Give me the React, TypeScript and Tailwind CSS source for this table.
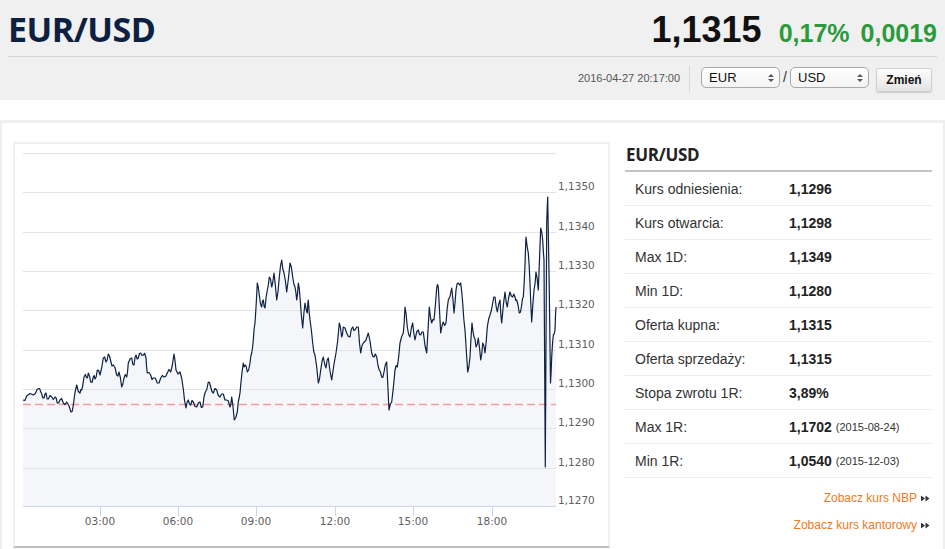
import React from 'react';

// Intraday EUR/USD quote card: header with rate, chart on the left, stats table on the right.

const PTS: [number, number][] = [
  [23, 400], [26.7, 396], [33.3, 395], [37.3, 389], [41.7, 394], [44, 398], [46, 393], [48.3, 399],
  [51.7, 397], [55, 397], [57.3, 403], [60, 400], [63.3, 403], [66.7, 402], [71, 412], [73.3, 405],
  [76.7, 385], [80, 393], [81.7, 390], [84, 377], [86.7, 378], [88.3, 373], [90.7, 382], [93.3, 377],
  [95, 379], [97.3, 370], [100, 375], [103.3, 358], [106, 362], [108.3, 354], [110.7, 361], [113.3, 365],
  [116.7, 375], [119, 372], [121.7, 387], [124, 378], [126.7, 377], [128.3, 363], [131.7, 358], [134, 365],
  [136, 355], [138.3, 358], [140.7, 353], [143.3, 355], [146, 358], [147.3, 373], [150.7, 375], [153.3, 378],
  [157.3, 383], [160.7, 378], [164, 377], [167.3, 373], [170.7, 372], [174, 354], [176, 370], [180, 372],
  [183.3, 389], [186, 408], [188.3, 400], [190.7, 405], [193.3, 402], [196.7, 407], [200, 402], [202.7, 407],
  [205.3, 392], [208.3, 382], [210.7, 387], [213.3, 393], [216.7, 390], [220, 397], [223.3, 394], [226.7, 400],
  [230, 407], [231.7, 397], [234.3, 420], [237.3, 412], [239.3, 397], [240.7, 385], [243.3, 363], [245, 365],
  [247.3, 372], [250, 363], [251.7, 353], [253.3, 340], [255, 323], [257.3, 283], [259.3, 295], [261.7, 307],
  [263.3, 300], [265, 308], [267.3, 290], [269.3, 277], [271.7, 287], [274, 273], [276.7, 300], [279.3, 277],
  [281.7, 260], [284, 273], [286.7, 292], [290, 263], [292.7, 277], [295, 287], [296.7, 300], [298.3, 283],
  [300, 297], [302.7, 328], [305, 303], [307.3, 313], [308.3, 300], [310, 320], [312.7, 343], [315, 355],
  [318.3, 383], [320.7, 370], [323.3, 357], [326, 368], [328.3, 358], [331.7, 380], [336, 353], [339.3, 323],
  [341.7, 337], [343.3, 327], [346.7, 333], [350, 337], [352.7, 327], [355, 330], [358.3, 327], [360.7, 353],
  [363.3, 343], [368.3, 333], [371.7, 353], [374, 357], [376.7, 357], [379.3, 370], [381.7, 377], [384, 372],
  [386.7, 362], [389, 410], [391.7, 402], [395, 370], [397.3, 367], [400, 343], [403.3, 333], [405, 307],
  [407.3, 327], [410, 337], [412.7, 323], [415, 340], [418.3, 330], [420.7, 335], [423.3, 332], [426.7, 353],
  [429.3, 307], [431.7, 323], [434, 320], [436.7, 288], [438.3, 287], [440.7, 333], [443.3, 322], [446, 323],
  [448.3, 300], [451.7, 288], [454, 313], [456, 290], [458.3, 283], [460.7, 283], [462.7, 303], [465, 330],
  [467.7, 372], [470, 357], [472, 323], [474, 337], [476, 347], [478.3, 338], [480.7, 360], [482.7, 343],
  [485, 353], [487.3, 327], [490, 315], [492.7, 303], [495, 297], [497.3, 312], [500, 300], [501.7, 323],
  [505, 292], [507.3, 307], [510, 292], [512.7, 297], [515, 297], [516.7, 300], [519.3, 313], [521.7, 305],
  [523.3, 297], [525, 265], [526, 237], [528.3, 253], [530, 283], [531.7, 322], [534, 290], [536, 272],
  [538.3, 290], [540.7, 228], [542.7, 240], [544, 260], [545.3, 467], [546.7, 223], [547.7, 197], [549.3, 290],
  [550.5, 383], [551.7, 357], [553.3, 335], [555, 330], [556, 307],
];

// small tick-level noise between the sampled points, skipped on the big spikes
const NOISE = [2.5, -2, 1.5, -3, 2, -1.5, 3, -2.5];
const SERIES: [number, number][] = PTS.flatMap(([x, y], i) => {
  const next = PTS[i + 1];
  if (!next || Math.abs(next[1] - y) > 40) return [[x, y]] as [number, number][];
  return [[x, y], [(x + next[0]) / 2, (y + next[1]) / 2 + NOISE[i % NOISE.length]]] as [number, number][];
});

const GRID = [153, 192, 232, 271, 310, 350, 389, 428, 468];
const Y_LABELS: [string, number][] = [
  ['1,1350', 192], ['1,1340', 232], ['1,1330', 271], ['1,1320', 310], ['1,1310', 350],
  ['1,1300', 389], ['1,1290', 428], ['1,1280', 468], ['1,1270', 506],
];
const X_LABELS: [string, number][] = [
  ['03:00', 100], ['06:00', 178], ['09:00', 256], ['12:00', 335], ['15:00', 413], ['18:00', 492],
];

const STATS: { label: string; value: string; date?: string }[] = [
  { label: 'Kurs odniesienia:', value: '1,1296' },
  { label: 'Kurs otwarcia:', value: '1,1298' },
  { label: 'Max 1D:', value: '1,1349' },
  { label: 'Min 1D:', value: '1,1280' },
  { label: 'Oferta kupna:', value: '1,1315' },
  { label: 'Oferta sprzedaży:', value: '1,1315' },
  { label: 'Stopa zwrotu 1R:', value: '3,89%' },
  { label: 'Max 1R:', value: '1,1702', date: '(2015-08-24)' },
  { label: 'Min 1R:', value: '1,0540', date: '(2015-12-03)' },
];

const PriceChart = () => {
  const line = SERIES.map(([x, y], i) => `${i ? 'L' : 'M'}${x} ${y.toFixed(1)}`).join(' ');
  const area = `${line} L556 506 L23 506 Z`;
  return (
    <svg width="593" height="402" viewBox="15 144 593 402" className="block">
      <path d={area} fill="#f5f6f9" />
      {GRID.map((y) => (
        <line key={y} x1="23" x2="556" y1={y + 0.5} y2={y + 0.5} stroke="#e3e3e3" strokeWidth="1" />
      ))}
      <line x1="23" x2="556" y1="404.5" y2="404.5" stroke="#f59b9b" strokeWidth="1.5" strokeDasharray="8 4" />
      <path d={line} fill="none" stroke="#0d2143" strokeWidth="1.2" strokeLinejoin="round" />
      <line x1="23" x2="556" y1="506.5" y2="506.5" stroke="#ccd6eb" strokeWidth="1" />
      {X_LABELS.map(([t, x]) => (
        <g key={t}>
          <line x1={x + 0.5} x2={x + 0.5} y1="506" y2="516" stroke="#ccd6eb" strokeWidth="1" />
          <text x={x} y="525" textAnchor="middle" fontSize="10.5" fill="#606060" fontFamily="'DejaVu Sans', sans-serif">
            {t}
          </text>
        </g>
      ))}
      {Y_LABELS.map(([t, y]) => (
        <text key={t} x="558" y={y - 2} fontSize="10.5" fill="#606060" fontFamily="'DejaVu Sans', sans-serif">
          {t}
        </text>
      ))}
    </svg>
  );
};

const Updown = () => (
  <svg width="6" height="10" viewBox="0 0 6 10" className="block">
    <path d="M0 4 L3 1 L6 4 Z M0 6 L3 9 L6 6 Z" fill="#555" />
  </svg>
);

const Select = ({ value }: { value: string }) => (
  <div className="flex h-[21px] w-[79px] items-center justify-between rounded-[5px] border border-[#a9a9a9] bg-gradient-to-b from-white to-[#f3f3f3] pl-[7px] pr-[5px] text-[13px] leading-none text-[#111]">
    <span>{value}</span>
    <Updown />
  </div>
);

const Arrows = () => (
  <svg width="9" height="7" viewBox="0 0 9 7" className="ml-[4px] inline-block">
    <path d="M0 0.5 L4 3.5 L0 6.5 Z M4.5 0.5 L8.5 3.5 L4.5 6.5 Z" fill="#333" />
  </svg>
);

export default function App() {
  return (
    <div className="h-[549px] w-[945px] overflow-hidden bg-white font-['Liberation_Sans',Arial,sans-serif]">
      <header className="h-[100px] bg-[#f0f0f0] px-2">
        <div className="flex h-[57px] items-baseline border-b border-[#d6d6d6] pt-[12px] leading-none">
          <h1 className="font-['Open_Sans',sans-serif] text-[34px] font-bold tracking-[-0.5px] text-[#0c2142]">EUR/USD</h1>
          <div className="ml-auto flex items-baseline">
            <span className="text-[36px] font-bold text-[#111]">1,1315</span>
            <span className="ml-[17px] text-[25px] font-bold text-[#2a9a3c]">0,17%</span>
            <span className="ml-[11px] text-[25px] font-bold text-[#2a9a3c]">0,0019</span>
          </div>
        </div>
        <div className="flex h-[43px] items-center justify-end pr-[5px]">
          <span className="text-[11px] text-[#555]">2016-04-27 20:17:00</span>
          <div className="ml-[9px] h-[26px] w-px bg-[#d8d8d8]" />
          <div className="ml-[11px] mb-[2px] flex items-center">
            <Select value="EUR" />
            <span className="mx-[3px] text-[14px] text-[#333]">/</span>
            <Select value="USD" />
          </div>
          <button className="ml-[7px] mt-[2px] h-[24px] w-[56px] rounded-[2px] border border-[#cfcfcf] bg-gradient-to-b from-[#fdfdfd] to-[#e4e4e4] text-[12px] font-bold text-[#111] shadow-[0_1px_1px_rgba(0,0,0,0.15)]">
            Zmień
          </button>
        </div>
      </header>

      <div className="mt-[20px] flex h-[430px] border-x-2 border-t-[3px] border-[#efefef] pl-[11px] pt-[19px]">
        <div className="h-[406px] w-[597px] shrink-0 border-2 border-[#f0f0f0] border-b-[#bdbdbd]">
          <PriceChart />
        </div>

        <div className="ml-[15px] w-[307px]">
          <h2 className="h-[30px] border-b-2 border-[#c4c4c4] pl-[1px] pt-[3px] font-['Open_Sans',sans-serif] text-[17px] font-bold leading-[20px] tracking-[-0.3px] text-[#222]">
            EUR/USD
          </h2>
          {STATS.map((s) => (
            <div key={s.label} className="flex h-[34px] items-center border-b border-[#eeeeee] pt-[2px] text-[14px]">
              <span className="w-[164px] pl-[10px] text-[#333]">{s.label}</span>
              <span className="font-bold text-[#222]">{s.value}</span>
              {s.date && <span className="ml-[4px] text-[11px] text-[#333]">{s.date}</span>}
            </div>
          ))}
          <div className="mt-[10px] flex flex-col items-end gap-[7px] pr-[2px] text-[12px] leading-[20px] text-[#f07a22]">
            <a className="flex items-center">Zobacz kurs NBP<Arrows /></a>
            <a className="flex items-center">Zobacz kurs kantorowy<Arrows /></a>
          </div>
        </div>
      </div>
    </div>
  );
}
